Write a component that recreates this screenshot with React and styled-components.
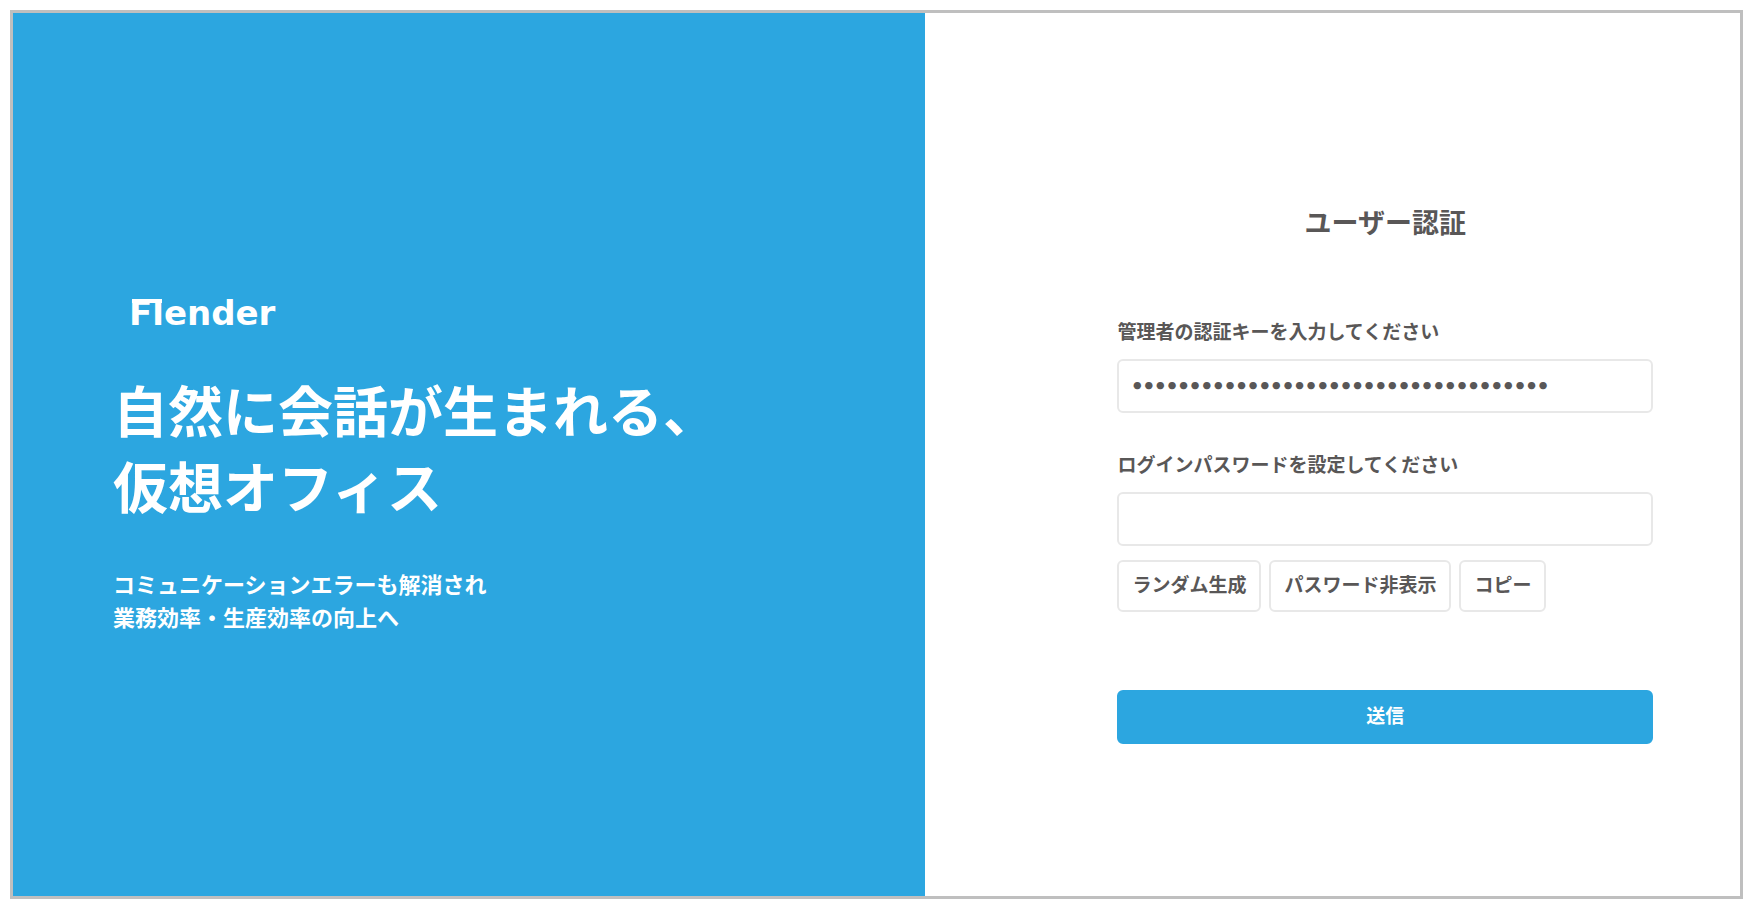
import React, { useState } from 'react';
import styled, { createGlobalStyle } from 'styled-components';

const GlobalStyle = createGlobalStyle`
    * {
        box-sizing: border-box;
    }

    body {
        margin: 0;
        background-color: #fff;
        color: #595757;
        font-family: 'Noto Sans CJK JP', sans-serif;
    }

    button,
    input {
        font-family: inherit;
        color: inherit;
    }
`;

const Page = styled.div`
    display: flex;
    min-height: 100vh;
    padding: 10px 12px 21px 10px;
`;

const Frame = styled.div`
    flex: 1;
    display: grid;
    grid-template-columns: 56fr 50fr;
    border: 3px solid #bfbfbf;
`;

const Hero = styled.section`
    display: flex;
    flex-direction: column;
    justify-content: center;
    padding: 16px 24px 0 100px;
    background-color: #2ca6e0;
    color: #fff;
`;

const Logo = styled.svg`
    display: block;
    width: 160px;
    height: 44px;
    margin-left: 16px;
    fill: #fff;
    font-family: 'DejaVu Sans', sans-serif;
    font-size: 34px;
    font-weight: bold;
`;

const Catch = styled.h1`
    margin: 34px 0 0;
    font-size: 55px;
    font-weight: bold;
    line-height: 76px;
`;

const Lead = styled.p`
    margin: 45px 0 0;
    font-size: 22px;
    font-weight: bold;
    line-height: 33px;
`;

const AuthPanel = styled.main`
    display: flex;
    flex-direction: column;
    justify-content: center;
    padding: 36px 87px 0 192px;
`;

const AuthForm = styled.form`
    display: flex;
    flex-direction: column;
`;

const Title = styled.h2`
    margin: 0 0 75px;
    font-size: 27px;
    font-weight: bold;
    line-height: 40px;
    text-align: center;
`;

const Field = styled.div`
    display: flex;
    flex-direction: column;
    gap: 14px;

    & + & {
        margin-top: 37px;
    }
`;

const Label = styled.label`
    font-size: 19px;
    font-weight: bold;
    line-height: 28px;
`;

const Input = styled.input`
    width: 100%;
    height: 54px;
    padding: 0 12px 4px;
    border: 2px solid #e8e8e8;
    border-radius: 6px;
    background-color: #fff;
    font-family: Lato, 'Noto Sans CJK JP', sans-serif;
    font-size: 20px;
    outline: none;

    &:focus {
        border-color: #2ca6e0;
    }
`;

const Tools = styled.div`
    display: flex;
    flex-wrap: wrap;
    gap: 8px;
    margin-top: 14px;
`;

const Button = styled.button`
    border: 2px solid #e8e8e8;
    border-radius: 6px;
    background-color: #fff;
    font-size: 19px;
    font-weight: bold;
    line-height: 28px;
    cursor: pointer;
`;

const ToolButton = styled(Button)`
    height: 52px;
    padding: 0 13px 4px;
`;

const SubmitButton = styled(Button)`
    height: 54px;
    margin-top: 78px;
    padding: 0 13px 4px;
    border-color: #2ca6e0;
    background-color: #2ca6e0;
    color: #fff;
`;

const FlenderLogo = () => (
    <Logo viewBox="0 0 160 44" role="img" aria-label="Flender">
        <text x="0" y="33">Flender</text>
        {/* flat roof shared by the F and the l */}
        <rect x="3" y="7" width="30" height="4" />
    </Logo>
);

const CHARS = 'ABCDEFGHJKLMNPQRSTUVWXYZabcdefghijkmnpqrstuvwxyz23456789';

const App = () => {
    const [authKey, setAuthKey] = useState('3f9c1d7e-5b2a-4c68-9e0f-7a41d2b6c853');
    const [password, setPassword] = useState('');
    const [visible, setVisible] = useState(true);

    const generate = () => {
        const values = crypto.getRandomValues(new Uint32Array(12));
        setPassword(Array.from(values, (v) => CHARS[v % CHARS.length]).join(''));
    };

    const copy = () => navigator.clipboard.writeText(password);

    return (
        <>
            <GlobalStyle />
            <Page>
                <Frame>
                    <Hero>
                        <FlenderLogo />
                        <Catch>
                            自然に会話が生まれる、
                            <br />
                            仮想オフィス
                        </Catch>
                        <Lead>
                            コミュニケーションエラーも解消され
                            <br />
                            業務効率・生産効率の向上へ
                        </Lead>
                    </Hero>
                    <AuthPanel>
                        <AuthForm onSubmit={(e) => e.preventDefault()}>
                            <Title>ユーザー認証</Title>
                            <Field>
                                <Label htmlFor="authKey">管理者の認証キーを入力してください</Label>
                                <Input
                                    id="authKey"
                                    type="password"
                                    value={authKey}
                                    onChange={(e) => setAuthKey(e.target.value)}
                                />
                            </Field>
                            <Field>
                                <Label htmlFor="password">ログインパスワードを設定してください</Label>
                                <Input
                                    id="password"
                                    type={visible ? 'text' : 'password'}
                                    value={password}
                                    onChange={(e) => setPassword(e.target.value)}
                                />
                            </Field>
                            <Tools>
                                <ToolButton type="button" onClick={generate}>ランダム生成</ToolButton>
                                <ToolButton type="button" onClick={() => setVisible(!visible)}>
                                    {visible ? 'パスワード非表示' : 'パスワード表示'}
                                </ToolButton>
                                <ToolButton type="button" onClick={copy}>コピー</ToolButton>
                            </Tools>
                            <SubmitButton type="submit">送信</SubmitButton>
                        </AuthForm>
                    </AuthPanel>
                </Frame>
            </Page>
        </>
    );
};

export default App;
